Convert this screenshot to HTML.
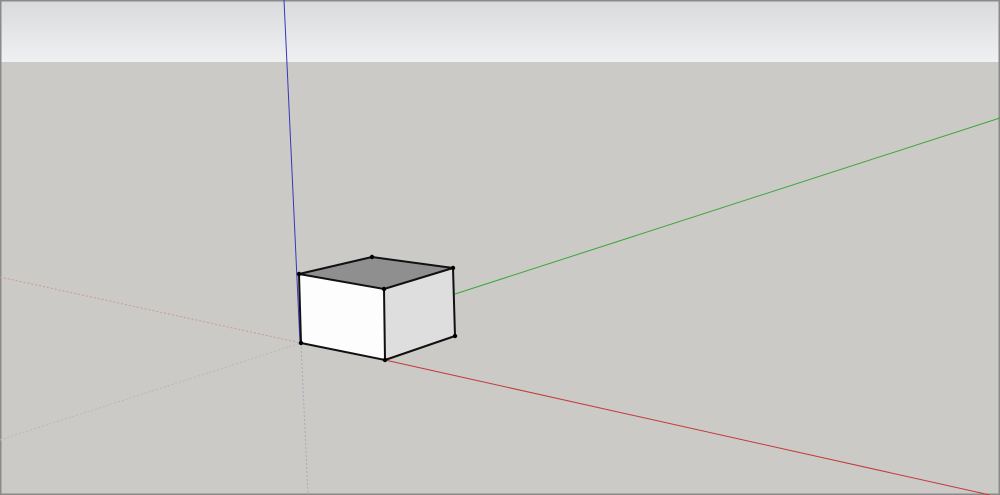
<!DOCTYPE html>
<html><head><style>
html,body{margin:0;padding:0;width:1000px;height:495px;overflow:hidden;background:#cbcac7}
</style></head><body>
<svg width="1000" height="495" viewBox="0 0 1000 495" xmlns="http://www.w3.org/2000/svg" style="display:block">
<defs><linearGradient id="sky" x1="0" y1="0" x2="0" y2="1">
<stop offset="0" stop-color="#d8dadb"/><stop offset="1" stop-color="#eef0f2"/></linearGradient></defs>
<rect x="0" y="0" width="1000" height="495" fill="#cbcac7"/>
<rect x="0" y="0" width="1000" height="62" fill="url(#sky)"/>
<rect x="0.5" y="0.5" width="999" height="494" fill="none" stroke="#8a8a8a" stroke-width="2"/>
<line x1="0" y1="277" x2="301" y2="343" stroke="#c99a98" stroke-width="1" stroke-dasharray="2,2"/>
<line x1="0" y1="440" x2="301" y2="343" stroke="#b9b8b4" stroke-width="1" stroke-dasharray="2,2"/>
<line x1="301" y1="343" x2="308" y2="495" stroke="#aab" stroke-width="1" stroke-dasharray="2,2"/>
<line x1="284" y1="0" x2="300" y2="343" stroke="#3a36b8" stroke-width="1"/>
<line x1="455" y1="294" x2="1000" y2="118" stroke="#3aa63a" stroke-width="1"/>
<line x1="385" y1="360" x2="990" y2="495" stroke="#c23a3a" stroke-width="1"/>
<polygon points="299,274 372,257 453,268 384,289" fill="#8f8f8f"/>
<polygon points="299,274 384,289 385,360 301,343" fill="#fdfdfd"/>
<polygon points="384,289 453,268 455,336 385,360" fill="#dedede"/>
<g stroke="#111" stroke-width="2" fill="none" stroke-linejoin="round">
<polygon points="299,274 372,257 453,268 455,336 385,360 301,343"/>
<polyline points="299,274 384,289 453,268"/>
<line x1="384" y1="289" x2="385" y2="360"/>
</g>
<g fill="#000">
<circle cx="299" cy="274" r="2.2"/><circle cx="372" cy="257" r="2.2"/><circle cx="453" cy="268" r="2.2"/>
<circle cx="384" cy="289" r="2.2"/><circle cx="301" cy="343" r="2.2"/><circle cx="385" cy="360" r="2.2"/><circle cx="455" cy="336" r="2.2"/>
</g>
</svg>
</body></html>
